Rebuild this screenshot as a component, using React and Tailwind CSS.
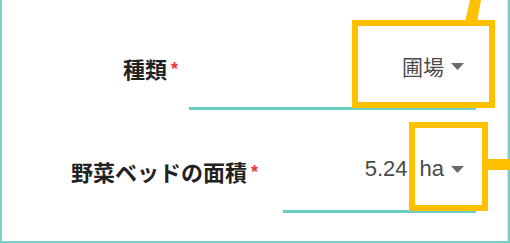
import React from 'react';

function Caret() {
  return (
    <svg width="13" height="7" viewBox="0 0 13 7" className="ml-[7px] shrink-0">
      <path d="M0 0h13L6.5 7z" fill="#6b6b6b" />
    </svg>
  );
}

function Required() {
  return (
    <span className="ml-[4px] self-start mt-[3px] text-[18px] leading-none text-[#e8353b] font-['Liberation_Sans',sans-serif] font-bold">*</span>
  );
}

export default function App() {
  return (
    <div className="relative w-[510px] h-[243px] bg-white overflow-hidden font-['Noto_Sans_CJK_JP',sans-serif]">
      <div className="h-full border-l-2 border-r-2 border-b-2 border-[#7ccfc8]">
        <div className="h-full border-r border-[#e2e2e2] pt-[26px] pr-[31px] flex flex-col gap-[18px]">
          {/* 種類 */}
          <div className="flex items-center justify-end h-[84px]">
            <div className="flex items-start text-[22px] leading-none font-bold text-[#222]">
              種類
              <Required />
            </div>
            <div className="w-[287px] h-full ml-[11px] border-b-[3px] border-[#6ccfc6] flex items-center justify-end pr-[12px]">
              <span className="text-[21px] leading-none text-[#4a4a4a]">圃場</span>
              <Caret />
            </div>
          </div>

          {/* 面積 */}
          <div className="flex items-center justify-end h-[85px]">
            <div className="flex items-start text-[22px] leading-none font-bold text-[#222]">
              野菜ベッドの面積
              <Required />
            </div>
            <div className="w-[193px] h-full ml-[25px] border-b-[3px] border-[#6ccfc6] flex items-center justify-end pr-[12px] font-['Liberation_Sans',sans-serif] text-[22px] leading-none text-[#4a4a4a]">
              <span>5.24</span>
              <span className="ml-[12px]">ha</span>
              <Caret />
            </div>
          </div>
        </div>
      </div>

      {/* annotations */}
      <svg className="absolute left-0 top-0" width="510" height="24" viewBox="0 0 510 24">
        <polygon points="470,0 481,0 477,22 465,22" fill="#ffc000" />
      </svg>
      <div className="absolute left-[352px] top-[20px] w-[143px] h-[88px] border-[6px] border-[#ffc000]" />
      <div className="absolute left-[409px] top-[122px] w-[79px] h-[89px] border-[6px] border-[#ffc000]" />
      <div className="absolute left-[488px] top-[159px] w-[22px] h-[11px] bg-[#ffc000]" />
    </div>
  );
}
